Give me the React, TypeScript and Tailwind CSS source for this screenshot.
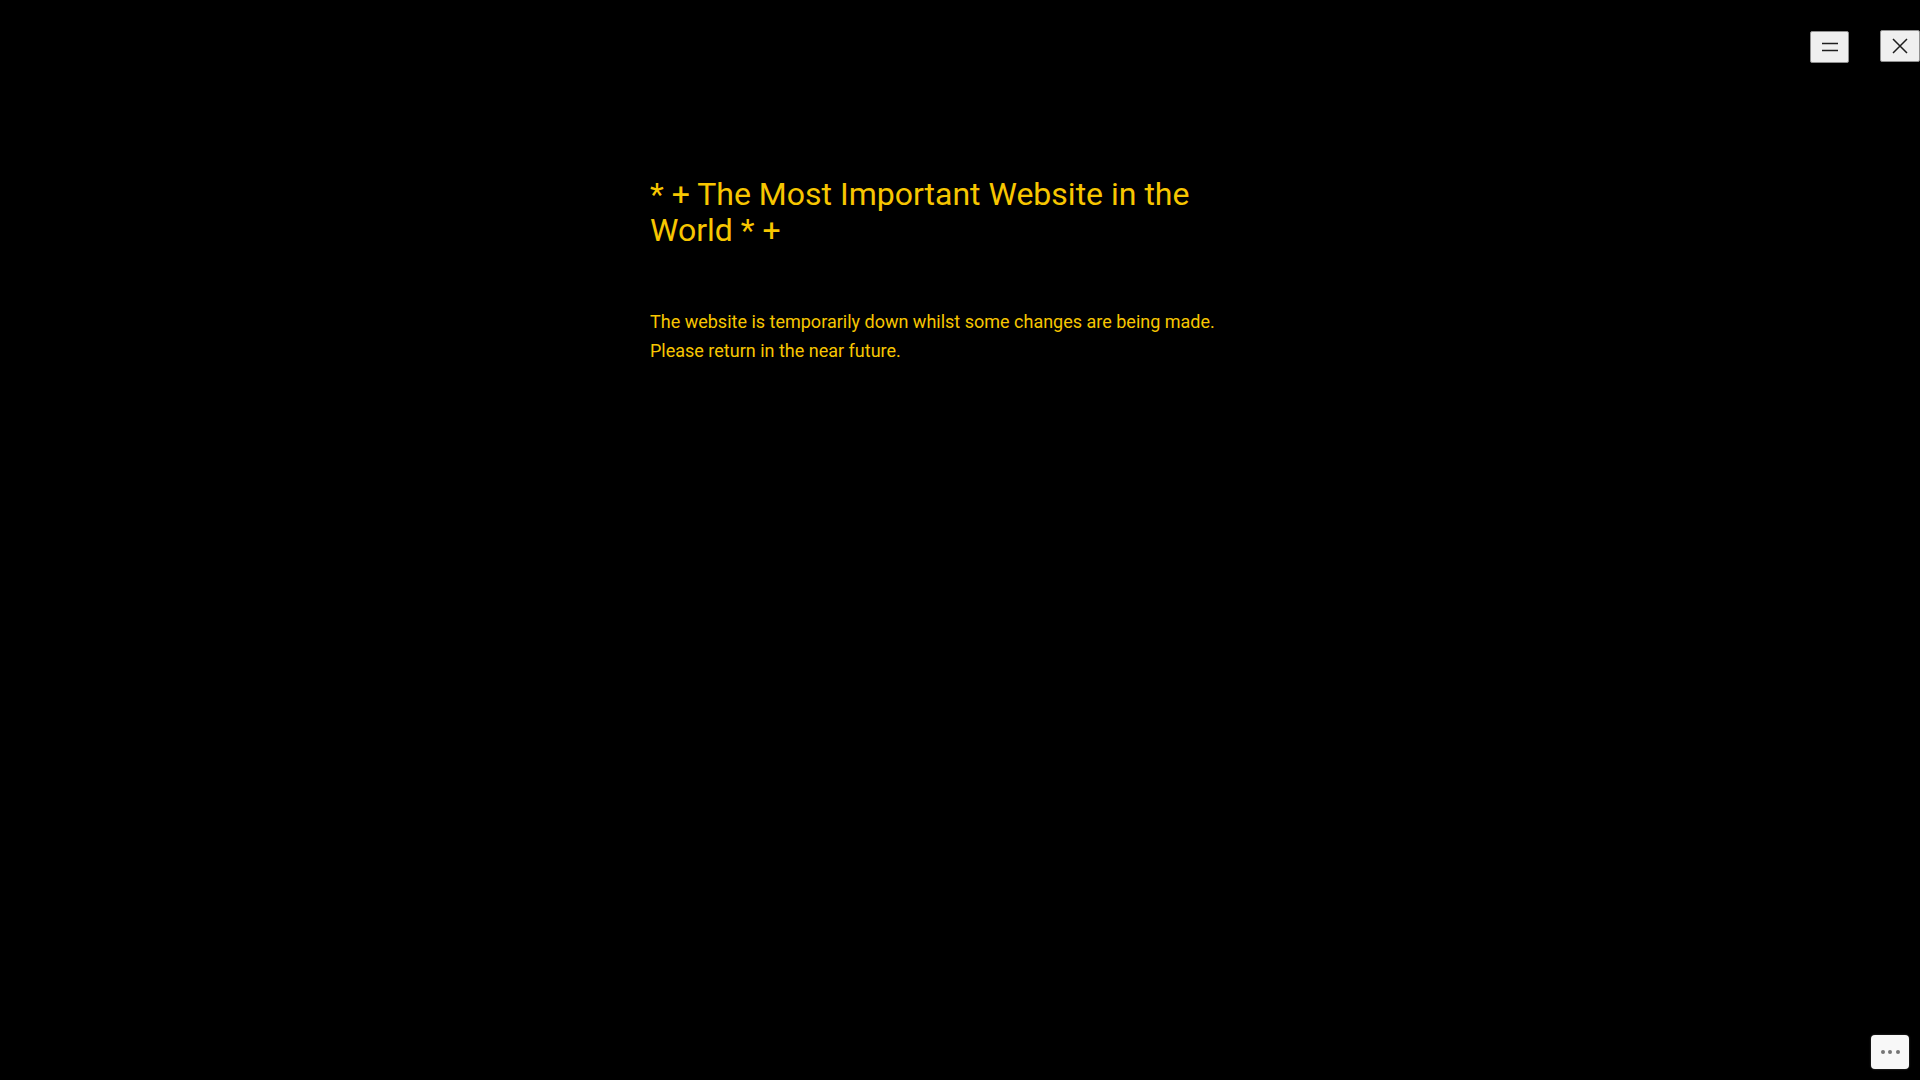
export default function App() {
  return (
    <div className="relative min-h-screen bg-black font-['Roboto',sans-serif]">
      {/* top right controls */}
      <div className="flex items-start justify-end gap-[31px] pt-[30px]">
        <button
          aria-label="Menu"
          className="mt-px flex h-[32px] w-[39px] items-center justify-center rounded-[2px] border border-[#8f8f8f] bg-[#efefef]"
        >
          <svg width="16" height="10" viewBox="0 0 16 10" fill="none" stroke="#1e1e1e" strokeWidth="1.5">
            <path d="M0 1.5h16M0 8.5h16" />
          </svg>
        </button>
        <button
          aria-label="Close"
          className="flex h-[32px] w-[40px] items-center justify-center rounded-[2px] border border-[#8f8f8f] bg-[#efefef]"
        >
          <svg width="16" height="16" viewBox="0 0 16 16" fill="none" stroke="#1e1e1e" strokeWidth="1.5">
            <path d="M1 1l14 14M15 1L1 15" />
          </svg>
        </button>
      </div>

      {/* Main content */}
      <main className="mx-auto mt-[113px] w-[620px] text-[#f7c600]">
        <div className="max-w-[600px]">
          <h1 className="text-[32px] leading-[36px] font-normal">
            * + The Most Important Website in the World * +
          </h1>
          <p className="mt-[60px] text-[18px] leading-[28.8px]">
            The website is temporarily down whilst some changes are being made. Please return in the near future.
          </p>
        </div>
      </main>

      {/* floating options button */}
      <button
        aria-label="Options"
        className="absolute right-[11px] bottom-[11px] flex h-[34px] w-[38px] items-center justify-center gap-[3.5px] rounded-[4px] bg-[#f8f8f8] shadow-[0_0_2px_rgba(255,255,255,0.3)]"
      >
        <span className="h-[4px] w-[4px] rounded-full bg-[#757575]" />
        <span className="h-[4px] w-[4px] rounded-full bg-[#757575]" />
        <span className="h-[4px] w-[4px] rounded-full bg-[#757575]" />
      </button>
    </div>
  );
}
